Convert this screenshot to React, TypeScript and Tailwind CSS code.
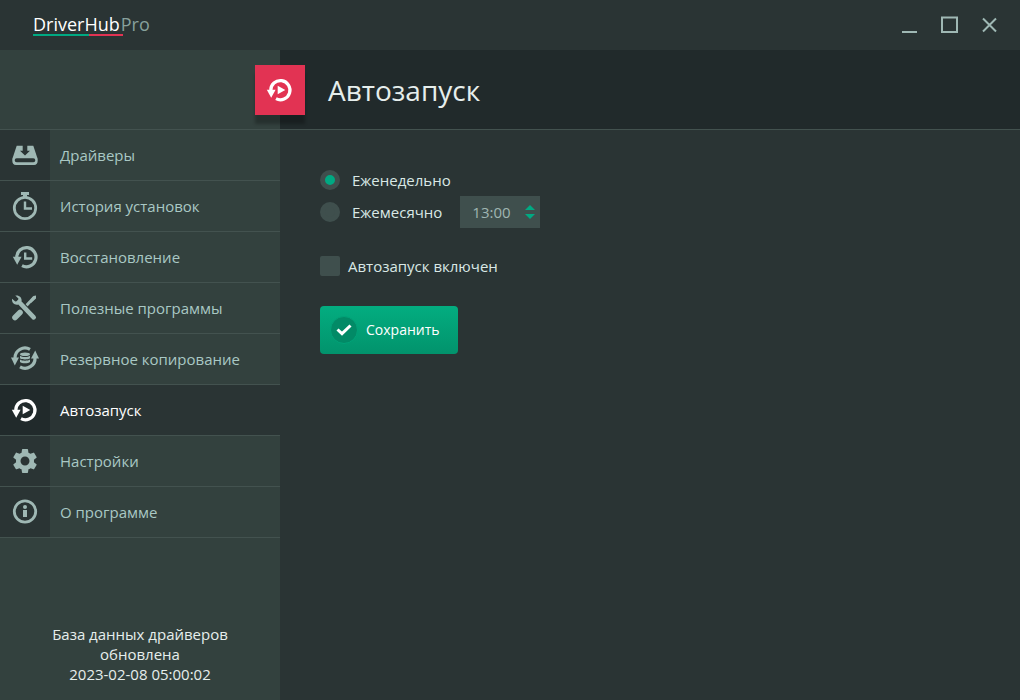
import { useState } from "react";
import type { ReactNode } from "react";
import { MdSettings } from "react-icons/md";

function Icon({ children }: { children: ReactNode }) {
  return (
    <svg viewBox="0 0 30 30" className="size-[30px]" fill="currentColor" aria-hidden="true">
      {children}
    </svg>
  );
}

function DriversIcon() {
  return (
    <Icon>
      <path
        fillRule="evenodd"
        d="M6.700 5.700h6v5H10l5 4.700 5-4.700h-2.700v-5h6l3.800 11.600c.6 1 .6 1.700.6 3.200 0 2.800-1.200 4.500-3.600 4.500H5.900c-2.400 0-3.600-1.700-3.600-4.500 0-1.500 0-2.200.6-3.200zM6.700 18.200a2 2 0 0 0 0 4h16.600a2 2 0 0 0 0-4z"
      />
    </Icon>
  );
}

function HistoryIcon() {
  return (
    <Icon>
      <circle cx="15" cy="17" r="10.700" fill="none" stroke="currentColor" strokeWidth="2.800" />
      <path d="M11 1h8v3h-2v3h-4V4h-2z" />
      <path d="M15 10.500v7h7" fill="none" stroke="currentColor" strokeWidth="2.400" />
    </Icon>
  );
}

// ring with an arrow head on the left, shared by restore and autostart
function ReturnRing() {
  return (
    <>
      <path
        d="M5.800 15.500A9.600 9.600 0 1 1 11 23.700"
        fill="none"
        stroke="currentColor"
        strokeWidth="3.200"
      />
      <path d="M1.800 14.800h8.800l-4.400 8z" />
    </>
  );
}

function RestoreIcon() {
  return (
    <Icon>
      <g transform="translate(1 0)">
        <ReturnRing />
        <path d="M14.200 10.500v6h7" fill="none" stroke="currentColor" strokeWidth="2.400" />
      </g>
    </Icon>
  );
}

function ToolsIcon() {
  return (
    <Icon>
      <path d="M10 19.500 5 24.500" stroke="currentColor" strokeWidth="5.600" strokeLinecap="round" />
      <path d="M15 14l9-9.500" stroke="currentColor" strokeWidth="3" />
      <path d="M19.600 8.400 23.400 3l2.600-.5v3l-5 4.600z" />
      <path d="M9 9 24 24.800" stroke="#2a3434" strokeWidth="6.400" />
      <path d="M9 9l14.700 15.300" stroke="currentColor" strokeWidth="4.600" strokeLinecap="round" />
      <path d="M5.300 2.600c3.700-.8 6.800 1.900 6.300 5.400l-3.800 3.700c-3.500.5-6.400-2.200-5.700-5.900l3.200 2.700 2.600-.6.500-2.500z" />
    </Icon>
  );
}

function BackupIcon() {
  return (
    <Icon>
      <g fill="none" stroke="currentColor" strokeWidth="3.200">
        <path d="M5 14A10 10 0 0 1 20 5.300" />
        <path d="M25 13.500A10 10 0 0 1 10 22.900" />
      </g>
      <path d="M1 13.400h8L4.800 21.500z" />
      <path d="M21 14.600h8L25.200 6.500z" />
      <ellipse cx="15" cy="10.200" rx="5" ry="1.800" />
      <path d="M10 11.800c2 1.600 8 1.600 10 0v2.400c-1.500 1.600-8.500 1.600-10 0z" />
      <path d="M10 15.600c2 1.600 8 1.600 10 0v2.400c-1.500 1.800-8.500 1.800-10 0z" />
    </Icon>
  );
}

function AutostartIcon() {
  return (
    <Icon>
      <ReturnRing />
      <path d="M12.700 10.800v8.400l7.600-4.200z" />
    </Icon>
  );
}

function InfoIcon() {
  return (
    <Icon>
      <circle cx="15" cy="14.500" r="10.700" fill="none" stroke="currentColor" strokeWidth="2.800" />
      <circle cx="15" cy="9.900" r="2" />
      <path d="M13 13h4v7h-4z" />
    </Icon>
  );
}

const menu = [
  { id: "drivers", label: "Драйверы", icon: <DriversIcon /> },
  { id: "history", label: "История установок", icon: <HistoryIcon /> },
  { id: "restore", label: "Восстановление", icon: <RestoreIcon /> },
  { id: "tools", label: "Полезные программы", icon: <ToolsIcon /> },
  { id: "backup", label: "Резервное копирование", icon: <BackupIcon /> },
  { id: "autostart", label: "Автозапуск", icon: <AutostartIcon /> },
  { id: "settings", label: "Настройки", icon: <MdSettings size={30} /> },
  { id: "about", label: "О программе", icon: <InfoIcon /> },
];

function TitleBar() {
  return (
    <header className="flex h-[50px] shrink-0 items-center justify-between bg-[#2a3434] pr-5 pl-[33px]">
      <div>
        <div className="flex items-center gap-px text-lg leading-5">
          <span className="text-white">DriverHub</span>
          <span className="text-[#87a09c]">Pro</span>
        </div>
        <div className="flex h-[2px] w-[90px]">
          <div className="w-14 bg-[#00a982]" />
          <div className="flex-1 bg-[#e23353]" />
        </div>
      </div>
      <div className="flex gap-5 text-[#9fb8b4]">
        <button type="button" aria-label="Свернуть" className="size-5">
          <svg viewBox="0 0 20 20" fill="none" stroke="currentColor" strokeWidth="2">
            <path d="M2 17h15" />
          </svg>
        </button>
        <button type="button" aria-label="Развернуть" className="size-5">
          <svg viewBox="0 0 20 20" fill="none" stroke="currentColor" strokeWidth="2">
            <path d="M2 2.500h15v14.500H2z" />
          </svg>
        </button>
        <button type="button" aria-label="Закрыть" className="size-5">
          <svg viewBox="0 0 20 20" fill="none" stroke="currentColor" strokeWidth="2">
            <path d="M3 3.500l13 13M16 3.500l-13 13" />
          </svg>
        </button>
      </div>
    </header>
  );
}

function Sidebar({ active, onSelect }: { active: string; onSelect: (id: string) => void }) {
  return (
    <aside className="flex w-[280px] shrink-0 flex-col bg-[#33413e]">
      <div className="h-20 border-b border-[#43524f]" />
      <nav>
        {menu.map((item) => {
          const isActive = item.id === active;
          return (
            <button
              key={item.id}
              type="button"
              onClick={() => onSelect(item.id)}
              className={`flex h-[51px] w-full items-center border-b border-[#43524f] text-left ${
                isActive ? "bg-[#2a3434] text-white" : "text-[#a9c8c4]"
              }`}
            >
              <span
                className={`flex h-full w-[50px] items-center justify-center ${
                  isActive ? "bg-[#212a2b]" : "bg-[#2a3434] text-[#9fb8b4]"
                }`}
              >
                {item.icon}
              </span>
              <span className="pl-[10px]">{item.label}</span>
            </button>
          );
        })}
      </nav>
      <p className="mx-auto mt-auto w-[200px] pb-4 text-center leading-5 text-[#e6eeec]">
        База данных драйверов обновлена
        <br />
        2023-02-08 05:00:02
      </p>
    </aside>
  );
}

function TimeField() {
  const [hour, setHour] = useState(13);
  const step = (n: number) => setHour((h) => (h + n + 24) % 24);

  return (
    <div className="flex h-8 w-20 items-center bg-[#3f4f4d] pr-[5px]">
      <input
        type="text"
        aria-label="Время запуска"
        readOnly
        value={`${String(hour).padStart(2, "0")}:00`}
        className="w-0 flex-1 bg-transparent pl-3 text-[#9fb5b1] outline-none"
      />
      <div className="flex flex-col gap-1 text-[#00a982]">
        <button type="button" aria-label="Больше" onClick={() => step(1)} className="block">
          <svg viewBox="0 0 10 5" className="h-[5px] w-[10px]" fill="currentColor">
            <path d="M5 0l5 5H0z" />
          </svg>
        </button>
        <button type="button" aria-label="Меньше" onClick={() => step(-1)} className="block">
          <svg viewBox="0 0 10 5" className="h-[5px] w-[10px]" fill="currentColor">
            <path d="M5 5L0 0h10z" />
          </svg>
        </button>
      </div>
    </div>
  );
}

function RadioRow({
  label,
  checked,
  onChange,
}: {
  label: string;
  checked: boolean;
  onChange: () => void;
}) {
  return (
    <label className="flex items-center gap-3">
      <input
        type="radio"
        name="period"
        checked={checked}
        onChange={onChange}
        className="size-5 appearance-none rounded-full border-5 border-[#3f4f4d] bg-[#3f4f4d] checked:bg-[#00a982]"
      />
      {label}
    </label>
  );
}

function AutostartForm() {
  const [period, setPeriod] = useState("week");
  const [enabled, setEnabled] = useState(false);

  return (
    <form className="px-10 pt-[34px] text-[#d9e8e5]" onSubmit={(e) => e.preventDefault()}>
      <div className="flex h-8 items-center">
        <RadioRow
          label="Еженедельно"
          checked={period === "week"}
          onChange={() => setPeriod("week")}
        />
      </div>
      <div className="flex h-8 items-center gap-[18px]">
        <RadioRow
          label="Ежемесячно"
          checked={period === "month"}
          onChange={() => setPeriod("month")}
        />
        <TimeField />
      </div>
      <label className="mt-7 flex h-5 w-fit items-center gap-2">
        <input
          type="checkbox"
          checked={enabled}
          onChange={(e) => setEnabled(e.target.checked)}
          className="size-5 appearance-none rounded-xs border-5 border-[#3f4f4d] bg-[#3f4f4d] checked:bg-[#00a982]"
        />
        Автозапуск включен
      </label>
      <button
        type="submit"
        className="mt-[30px] flex h-12 items-center gap-2 rounded bg-linear-to-b from-[#03ad80] to-[#02936c] pr-[18px] pl-[10px] text-sm font-medium text-white"
      >
        <span className="flex size-7 items-center justify-center rounded-full border border-[#02a379] bg-[#028a66]">
          <svg viewBox="0 0 16 12" className="h-3 w-4" fill="none" stroke="#fff" strokeWidth="3">
            <path d="M1.500 5.500l4.500 4.200L14.500 1.500" />
          </svg>
        </span>
        Сохранить
      </button>
    </form>
  );
}

export default function App() {
  const [active, setActive] = useState("autostart");
  const page = menu.find((item) => item.id === active)!;

  return (
    <div className="flex min-h-screen flex-col bg-[#2a3434] font-['Open_Sans','Noto_Sans',sans-serif] text-[15px]">
      <TitleBar />
      <div className="flex flex-1">
        <Sidebar active={active} onSelect={setActive} />
        <main className="min-w-0 flex-1">
          <div className="relative flex h-20 items-center border-b border-[#43524f] bg-[#212a2b] pl-12">
            <div className="absolute top-[15px] -left-[25px] flex size-[50px] items-center justify-center bg-[#e23353] text-white shadow-[0_9px_3px_rgba(0,0,0,0.25)]">
              {page.icon}
            </div>
            <h1 className="text-[28px] text-[#e6eeec]">{page.label}</h1>
          </div>
          <AutostartForm />
        </main>
      </div>
    </div>
  );
}
